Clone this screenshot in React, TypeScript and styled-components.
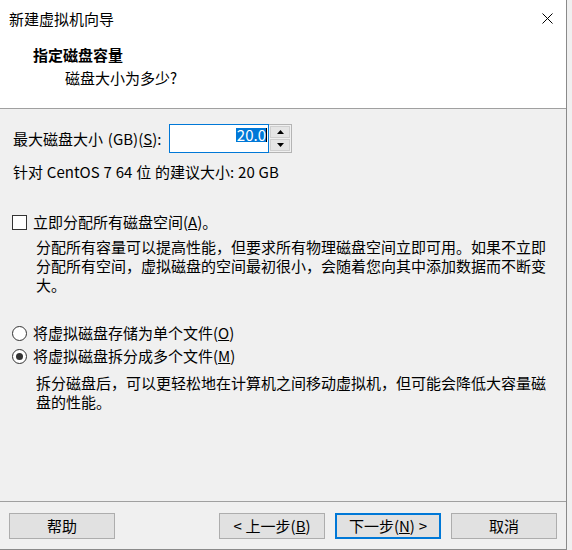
import React from "react";
import styled, { createGlobalStyle } from "styled-components";

const GlobalStyle = createGlobalStyle`
  html, body {
    margin: 0;
    padding: 0;
    background: #f0f0f0;
  }
  body {
    font-family: "Noto Sans CJK SC", "Microsoft YaHei UI", sans-serif;
    -webkit-font-smoothing: none;
  }
`;

const Window = styled.div`
  width: 567px;
  height: 550px;
  box-sizing: border-box;
  border-right: 1px solid #8a8a8a;
  border-bottom: 1px solid #8a8a8a;
  background: #f0f0f0;
  color: #000;
  font-size: 15px;
  word-spacing: 0.5px;
  display: flex;
  flex-direction: column;
`;

const TitleBar = styled.div`
  height: 38px;
  flex: none;
  background: #fff;
  display: flex;
  align-items: center;
  justify-content: space-between;
  padding: 0 13px 0 9px;
  line-height: 20px;
`;

const CloseIcon = styled.svg`
  width: 11px;
  height: 11px;
  display: block;
  margin-top: -2px;
`;

const Header = styled.div`
  height: 71px;
  flex: none;
  box-sizing: border-box;
  background: #fff;
  border-bottom: 1px solid #a0a0a0;
  padding: 7px 0 0 33px;
`;

const HeaderTitle = styled.div`
  font-weight: 700;
  line-height: 20px;
`;

const HeaderSub = styled.div`
  line-height: 20px;
  margin-top: 3px;
  padding-left: 32px;
`;

const Body = styled.div`
  flex: 1;
  padding: 15px 0 0 12px;
`;

const SizeRow = styled.div`
  display: flex;
  align-items: center;
  height: 29px;
`;

const FieldLabel = styled.div`
  width: 157px;
  line-height: 20px;
  padding-left: 1px;
  box-sizing: border-box;
  word-spacing: 1.5px;
`;

const SpinBox = styled.div`
  display: flex;
  height: 29px;
`;

const SpinInput = styled.div`
  width: 100px;
  height: 29px;
  box-sizing: border-box;
  border: 1px solid #0078d7;
  background: #fff;
  display: flex;
  justify-content: flex-end;
  align-items: flex-start;
  padding: 2px 1px 0 0;
`;

const Selected = styled.span`
  background: #0078d7;
  color: #fff;
  line-height: 14px;
  height: 14px;
  margin-top: 1px;
  padding: 0 0 0 1px;
  font-size: 15px;
`;

const Caret = styled.span`
  width: 1px;
  height: 14px;
  margin-top: 1px;
  background: #000;
`;

const Spinner = styled.div`
  width: 23px;
  height: 29px;
  display: flex;
  flex-direction: column;
  box-sizing: border-box;
  border: 1px solid #b4b4b4;
  border-left: none;
  background: #f0f0f0;
  padding: 1px;
  gap: 1px;
`;

const SpinButton = styled.div`
  flex: 1;
  background: #e5e5e5;
  border: 1px solid #cfcfcf;
  display: flex;
  align-items: center;
  justify-content: center;
`;

const Hint = styled.div`
  margin-top: 9px;
  line-height: 20px;
  padding-left: 1px;
`;

const OptionRow = styled.div<{ $mt: number }>`
  display: flex;
  align-items: center;
  height: 20px;
  margin-top: ${(p) => p.$mt}px;
  line-height: 20px;
`;

const CheckBox = styled.div`
  width: 15px;
  height: 15px;
  box-sizing: border-box;
  border: 1px solid #333;
  background: #fff;
  margin-right: 6px;
  flex: none;
`;

const Radio = styled.div<{ $checked?: boolean }>`
  width: 15px;
  height: 15px;
  box-sizing: border-box;
  border: 1px solid #333;
  border-radius: 50%;
  background: #fff;
  margin-right: 6px;
  flex: none;
  display: flex;
  align-items: center;
  justify-content: center;
  &::after {
    content: "";
    display: ${(p) => (p.$checked ? "block" : "none")};
    width: 7px;
    height: 7px;
    border-radius: 50%;
    background: #333;
  }
`;

const Desc = styled.div<{ $mt: number }>`
  margin-top: ${(p) => p.$mt}px;
  padding-left: 24px;
  line-height: 19px;
  white-space: nowrap;
`;

const Footer = styled.div`
  flex: none;
  height: 48px;
  box-sizing: border-box;
  border-top: 1px solid #a0a0a0;
  padding: 11px 9px 0 9px;
  display: flex;
  justify-content: space-between;
  align-items: flex-start;
`;

const ButtonGroup = styled.div`
  display: flex;
  gap: 10px;
`;

const Button = styled.div<{ $primary?: boolean }>`
  width: 106px;
  height: 26px;
  box-sizing: border-box;
  background: #e1e1e1;
  border: ${(p) => (p.$primary ? "2px solid #0078d7" : "1px solid #adadad")};
  display: flex;
  align-items: center;
  justify-content: center;
  line-height: 20px;
  white-space: pre;
`;

const Arrow = ({ up }: { up?: boolean }) => (
  <svg width="7" height="4" viewBox="0 0 7 4">
    <polygon points={up ? "0,4 7,4 3.5,0" : "0,0 7,0 3.5,4"} fill="#000" />
  </svg>
);

export default function App() {
  return (
    <>
      <GlobalStyle />
      <Window>
        <TitleBar>
          <span>新建虚拟机向导</span>
          <CloseIcon viewBox="0 0 11 11">
            <path d="M0.5 0.5 L10.5 10.5 M10.5 0.5 L0.5 10.5" stroke="#000" strokeWidth="1" />
          </CloseIcon>
        </TitleBar>
        <Header>
          <HeaderTitle>指定磁盘容量</HeaderTitle>
          <HeaderSub>磁盘大小为多少?</HeaderSub>
        </Header>
        <Body>
          <SizeRow>
            <FieldLabel>
              最大磁盘大小 (GB)(<u>S</u>):
            </FieldLabel>
            <SpinBox>
              <SpinInput>
                <Selected>20.0</Selected>
                <Caret />
              </SpinInput>
              <Spinner>
                <SpinButton>
                  <Arrow up />
                </SpinButton>
                <SpinButton>
                  <Arrow />
                </SpinButton>
              </Spinner>
            </SpinBox>
          </SizeRow>
          <Hint>针对 CentOS 7 64 位 的建议大小: 20 GB</Hint>

          <OptionRow $mt={30}>
            <CheckBox />
            <span>
              立即分配所有磁盘空间(<u>A</u>)。
            </span>
          </OptionRow>
          <Desc $mt={5}>
            分配所有容量可以提高性能，但要求所有物理磁盘空间立即可用。如果不立即
            <br />
            分配所有空间，虚拟磁盘的空间最初很小，会随着您向其中添加数据而不断变
            <br />
            大。
          </Desc>

          <OptionRow $mt={29}>
            <Radio />
            <span>
              将虚拟磁盘存储为单个文件(<u>O</u>)
            </span>
          </OptionRow>
          <OptionRow $mt={3}>
            <Radio $checked />
            <span>
              将虚拟磁盘拆分成多个文件(<u>M</u>)
            </span>
          </OptionRow>
          <Desc $mt={7}>
            拆分磁盘后，可以更轻松地在计算机之间移动虚拟机，但可能会降低大容量磁
            <br />
            盘的性能。
          </Desc>
        </Body>
        <Footer>
          <Button>帮助</Button>
          <ButtonGroup>
            <Button>
              {"< 上一步("}
              <u>B</u>)
            </Button>
            <Button $primary>
              下一步(<u>N</u>
              {") >"}
            </Button>
            <Button>取消</Button>
          </ButtonGroup>
        </Footer>
      </Window>
    </>
  );
}
